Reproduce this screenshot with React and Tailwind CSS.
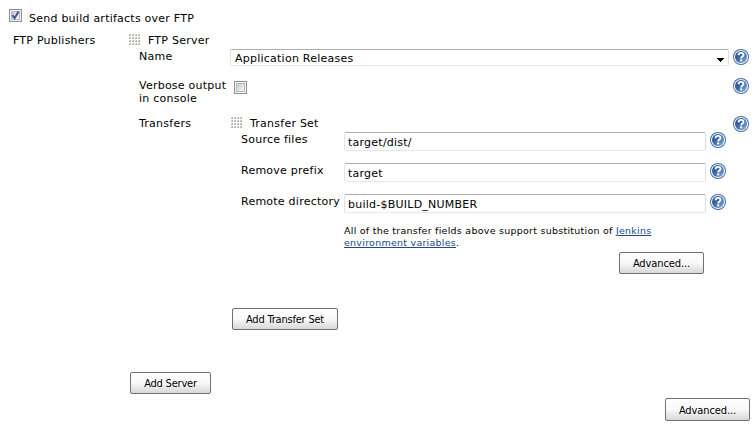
import React from "react";

function HelpIcon() {
  return (
    <svg className="block size-4 shrink-0" viewBox="0 0 16 16" role="img" aria-label="Help">
      <defs>
        <linearGradient id="helpFill" x1="0" y1="0" x2="1" y2="1">
          <stop offset="0" stopColor="#234a87" />
          <stop offset="0.45" stopColor="#3c69a8" />
          <stop offset="1" stopColor="#8fb0d8" />
        </linearGradient>
      </defs>
      <circle cx="8" cy="8" r="8" fill="#3d6ba8" />
      <circle cx="8" cy="8" r="7.1" fill="#f2f6fb" />
      <circle cx="8" cy="8" r="6" fill="url(#helpFill)" />
      <path d="M5.6 6.2C5.6 4.7 6.6 3.9 8.1 3.9c1.4 0 2.4.8 2.4 2 0 1.7-2.3 1.7-2.3 3.5" fill="none" stroke="#fff" strokeWidth="1.9" />
      <rect x="7.1" y="10.4" width="2.1" height="1.9" fill="#fff" />
    </svg>
  );
}

function Grip() {
  return (
    <div className="grid h-3 w-3 shrink-0 grid-cols-4 grid-rows-4">
      {Array.from({ length: 16 }, (_, i) => (
        <span key={i} className="size-[2px] border-r border-b border-[#b4b4ae] bg-[#e2e2dd]" />
      ))}
    </div>
  );
}

function Checkbox({ checked }) {
  return (
    <span className="block size-[13px] shrink-0 border border-[#8e8f8f] bg-[#f4f4f4] p-px">
      <span className="block size-[9px] border border-[#b5bac2] bg-linear-to-br from-[#c6cbd2] to-[#f6f6f6]">
        {checked && (
          <svg className="block size-[7px] overflow-visible" viewBox="0 0 7 7">
            <path d="M0.4 3.2L2.6 6.2L6.6 -0.4" fill="none" stroke="#3b56a0" strokeWidth="2" />
          </svg>
        )}
      </span>
    </span>
  );
}

const fieldBorder = "rounded-[2px] border border-t-[#abadb3] border-r-[#dbdfe6] border-b-[#e3e9ef] border-l-[#e2e3ea] bg-white";

function Button({ className, children }) {
  return (
    <button
      className={
        "block shrink-0 rounded-[2px] border border-[#707070] bg-linear-to-b from-white via-[#f8f8f8] to-[#d8d8d8] pt-[2px] text-center font-['DejaVu_Sans_Condensed','DejaVu_Sans',sans-serif] text-[11px] leading-[14px] whitespace-nowrap [font-stretch:condensed] " +
        className
      }
    >
      {children}
    </button>
  );
}

function TransferField({ label, value }) {
  return (
    <div className="flex h-[31px] items-start">
      <span className="w-[103px]">{label}</span>
      <div className={"h-[19px] w-[362px] pt-[2px] pl-[3px] " + fieldBorder}>{value}</div>
      <div className="ml-1">
        <HelpIcon />
      </div>
    </div>
  );
}

export default function App() {
  return (
    <div className="h-[427px] w-[754px] overflow-hidden bg-white font-['DejaVu_Sans',Verdana,sans-serif] text-[11px] leading-[16px] tracking-[0.24px] whitespace-nowrap text-black">
      <div className="flex h-[33px] items-start pl-[9px]">
        <div className="pt-[9px]">
          <Checkbox checked />
        </div>
        <span className="ml-[7px] pt-[11px]">Send build artifacts over FTP</span>
      </div>

      <div className="flex">
        <div className="w-[129px] shrink-0 pl-[13px]">FTP Publishers</div>
        <div className="w-[625px]">
          <div className="flex h-4">
            <div className="pt-px">
              <Grip />
            </div>
            <span className="ml-[7px]">FTP Server</span>
          </div>

          <div className="flex h-[29px] items-start pl-[10px]">
            <span className="w-[91px]">Name</span>
            <div className={"flex h-[17px] w-[499px] justify-between pl-1 " + fieldBorder}>
              <span className="pt-px">Application Releases</span>
              <svg className="mt-[8px] mr-[4px] h-[4px] w-[7px]" viewBox="0 0 7 4">
                <path d="M0 0h7v1h-1v1h-1v1h-1v1h-1v-1h-1v-1h-1v-1h-1z" fill="#000" />
              </svg>
            </div>
            <div className="ml-1">
              <HelpIcon />
            </div>
          </div>

          <div className="flex h-[38px] items-start pl-[10px]">
            <span className="w-[95px] pt-px leading-[13px]">
              Verbose output
              <br />
              in console
            </span>
            <div className="pt-[3px]">
              <Checkbox />
            </div>
            <div className="ml-auto pr-[5px]">
              <HelpIcon />
            </div>
          </div>

          <div className="flex items-start pl-[10px]">
            <span className="w-[92px] shrink-0">Transfers</span>
            <div className="h-[256px] w-[502px]">
              <div className="flex h-4">
                <div className="pt-px">
                  <Grip />
                </div>
                <span className="ml-[7px]">Transfer Set</span>
              </div>
              <div className="pl-[10px]">
                <TransferField label="Source files" value="target/dist/" />
                <TransferField label="Remove prefix" value="target" />
                <TransferField label="Remote directory" value="build-$BUILD_NUMBER" />
              </div>
              <div className="h-[27px] pl-[113px] text-[9.5px] leading-[12px] tracking-[0.25px]">
                All of the transfer fields above support substitution of{" "}
                <a className="text-[#204a87] underline">Jenkins</a>
                <br />
                <a className="text-[#204a87] underline">environment variables</a>.
              </div>
              <Button className="ml-[388px] h-[22px] w-[85px] tracking-[-0.1px]">Advanced...</Button>
              <Button className="mt-[34px] ml-px h-[22px] w-[106px] tracking-[-0.2px]">Add Transfer Set</Button>
            </div>
            <HelpIcon />
          </div>

          <Button className="ml-[1px] h-[22px] w-[81px] tracking-[-0.2px]">Add Server</Button>
          <Button className="mt-[4px] ml-[536px] h-[23px] w-[85px] tracking-[-0.1px]">Advanced...</Button>
        </div>
      </div>
    </div>
  );
}
